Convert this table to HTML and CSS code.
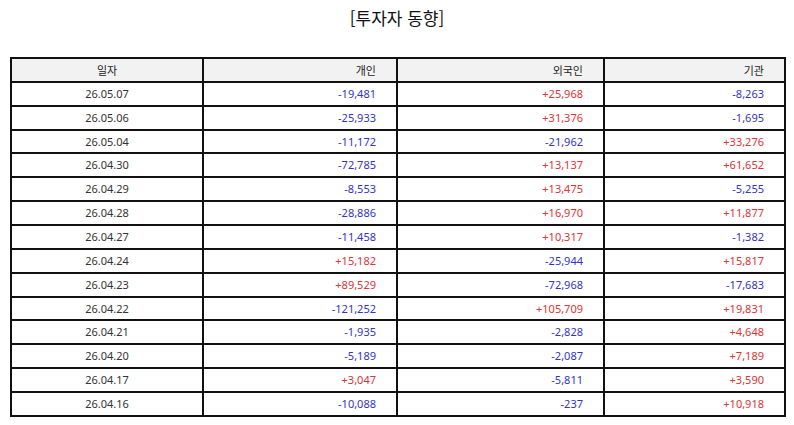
FILE: index.html
```html
<!DOCTYPE html>
<html lang="ko">
<head>
<meta charset="utf-8">
<link rel="stylesheet" href="styles.css">
</head>
<body>
<div class="page">
  <h1 class="title">[투자자 동향]</h1>
  <table class="grid">
    <colgroup>
      <col class="c-date"><col class="c-ind"><col class="c-for"><col class="c-ins">
    </colgroup>
    <thead>
      <tr><th class="center">일자</th><th>개인</th><th>외국인</th><th>기관</th></tr>
    </thead>
    <tbody>
      <tr><td class="center">26.05.07</td><td class="neg">-19,481</td><td class="pos">+25,968</td><td class="neg">-8,263</td></tr>
      <tr><td class="center">26.05.06</td><td class="neg">-25,933</td><td class="pos">+31,376</td><td class="neg">-1,695</td></tr>
      <tr><td class="center">26.05.04</td><td class="neg">-11,172</td><td class="neg">-21,962</td><td class="pos">+33,276</td></tr>
      <tr><td class="center">26.04.30</td><td class="neg">-72,785</td><td class="pos">+13,137</td><td class="pos">+61,652</td></tr>
      <tr><td class="center">26.04.29</td><td class="neg">-8,553</td><td class="pos">+13,475</td><td class="neg">-5,255</td></tr>
      <tr><td class="center">26.04.28</td><td class="neg">-28,886</td><td class="pos">+16,970</td><td class="pos">+11,877</td></tr>
      <tr><td class="center">26.04.27</td><td class="neg">-11,458</td><td class="pos">+10,317</td><td class="neg">-1,382</td></tr>
      <tr><td class="center">26.04.24</td><td class="pos">+15,182</td><td class="neg">-25,944</td><td class="pos">+15,817</td></tr>
      <tr><td class="center">26.04.23</td><td class="pos">+89,529</td><td class="neg">-72,968</td><td class="neg">-17,683</td></tr>
      <tr><td class="center">26.04.22</td><td class="neg">-121,252</td><td class="pos">+105,709</td><td class="pos">+19,831</td></tr>
      <tr><td class="center">26.04.21</td><td class="neg">-1,935</td><td class="neg">-2,828</td><td class="pos">+4,648</td></tr>
      <tr><td class="center">26.04.20</td><td class="neg">-5,189</td><td class="neg">-2,087</td><td class="pos">+7,189</td></tr>
      <tr><td class="center">26.04.17</td><td class="pos">+3,047</td><td class="neg">-5,811</td><td class="pos">+3,590</td></tr>
      <tr><td class="center">26.04.16</td><td class="neg">-10,088</td><td class="neg">-237</td><td class="pos">+10,918</td></tr>
    </tbody>
  </table>
</div>
</body>
</html>
```
FILE: styles.css
```css
html, body {
  margin: 0;
  padding: 0;
  background: #ffffff;
}
body {
  font-family: "Noto Sans", "Noto Sans CJK KR", sans-serif;
  color: #333333;
}
.page {
  padding: 0 10px;
}
.title {
  margin: 0;
  padding-top: 6px;
  height: 57px;
  box-sizing: border-box;
  text-align: center;
  font-family: "Noto Sans CJK KR", sans-serif;
  font-size: 17px;
  font-weight: normal;
  line-height: 24px;
  color: #111111;
}
.grid {
  width: 774px;
  border-collapse: collapse;
  table-layout: fixed;
  font-size: 11px;
}
.c-date { width: 192px; }
.c-ind { width: 194px; }
.c-for { width: 207px; }
.c-ins { width: 181px; }
.grid th,
.grid td {
  border: 2px solid #111111;
  height: 21.87px;
  padding: 0 20px 0 4px;
  text-align: right;
  font-weight: normal;
  line-height: 14px;
}
.grid th {
  background: #f2f2f2;
  color: #222222;
  font-family: "Noto Sans CJK KR", sans-serif;
}
.grid .center {
  text-align: center;
  padding: 0 4px;
}
.grid .neg { color: #3333cc; }
.grid .pos { color: #e03333; }
```
